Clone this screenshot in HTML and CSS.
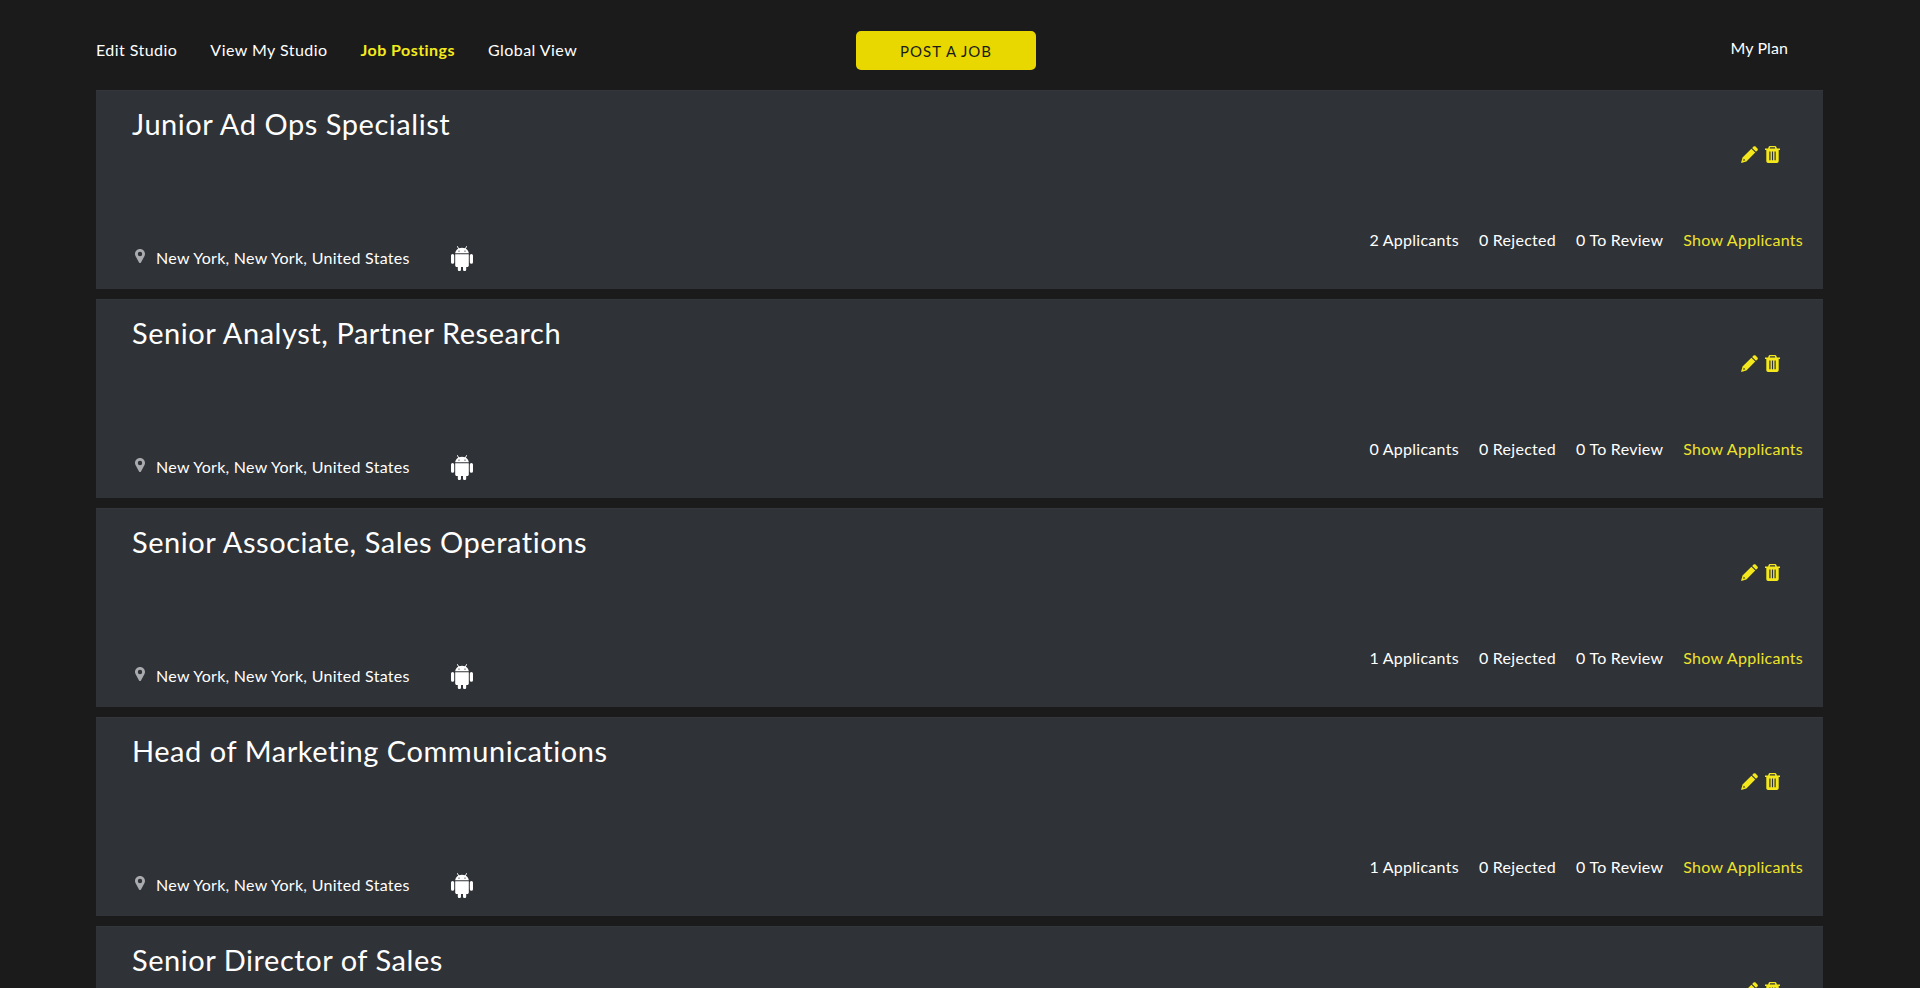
FILE: index.html
```html
<!DOCTYPE html>
<html lang="en">
<head>
<meta charset="utf-8">
<title>Job Postings</title>
<link rel="stylesheet" href="styles.css">
</head>
<body>
<svg class="defs" width="0" height="0" aria-hidden="true">
  <symbol id="pin" viewBox="0 0 10 14"><path fill-rule="evenodd" d="M5 0C2.200 0 0 2.200 0 5c0 .8.2 1.400.5 2L4 13.400c.4.8 1.600.8 2 0L9.500 7c.3-.6.5-1.200.5-2 0-2.800-2.200-5-5-5zm0 7.200A2.200 2.200 0 1 1 5 2.800a2.200 2.200 0 0 1 0 4.400z"/></symbol>
  <symbol id="android" viewBox="0 0 22 26"><path fill-rule="evenodd" d="M6.600 1 5.900 1.400 7.200 3.700C5.400 4.700 4.300 6.400 4.200 8.300h13.600c-.1-1.900-1.200-3.600-3-4.600l1.300-2.300-.7-.4-1.300 2.300a8 8 0 0 0-6.200 0L6.600 1zM8 5.400a.7.700 0 1 1 0 1.400.7.700 0 0 1 0-1.400zm6 0a.7.700 0 1 1 0 1.400.7.700 0 0 1 0-1.400zM4.200 9.200v11.200c0 .9.700 1.500 1.500 1.500h1.100v2.700a1.600 1.600 0 0 0 3.200 0v-2.700h2v2.700a1.600 1.600 0 0 0 3.200 0v-2.700h1.100c.8 0 1.500-.6 1.500-1.500V9.200H4.200zM1.600 9A1.600 1.600 0 0 0 0 10.600v6.600a1.600 1.600 0 0 0 3.200 0v-6.600A1.600 1.600 0 0 0 1.600 9zm18.800 0a1.600 1.600 0 0 0-1.600 1.600v6.600a1.600 1.600 0 0 0 3.200 0v-6.600A1.600 1.600 0 0 0 20.400 9z"/></symbol>
  <symbol id="pencil" viewBox="0 0 18 18"><path fill-rule="evenodd" d="M13.300.6 11.800 2.100l4.100 4.100 1.500-1.500c.6-.6.6-1.500 0-2.100l-2-2c-.6-.6-1.500-.6-2.100 0zM11 2.900 1.600 12.300 0 18l5.700-1.600 9.400-9.400L11 2.900zM2.900 13.400l1.700 1.700-2.300.6.600-2.300z"/></symbol>
  <symbol id="trash" viewBox="0 0 15 17"><path fill-rule="evenodd" d="M5 0h5c.7 0 1.200.4 1.400 1l.5 1.500H15V4h-1.300v11c0 1.100-.8 2-1.800 2H3.100c-1 0-1.800-.9-1.800-2V4H0V2.500h3.100L3.600 1C3.800.4 4.300 0 5 0zm.1 1.300-.4 1.200h5.600l-.4-1.200H5.100zM4.300 5.600v8.600h1.200V5.600H4.300zm2.600 0v8.600h1.200V5.600H6.900zm2.600 0v8.600h1.200V5.600H9.500z"/></symbol>
</svg>
<div class="page">
  <header class="topbar">
    <nav class="nav">
      <a class="nav-link" href="#">Edit Studio</a>
      <a class="nav-link" href="#">View My Studio</a>
      <a class="nav-link nav-active" href="#">Job Postings</a>
      <a class="nav-link" href="#">Global View</a>
    </nav>
    <a class="post-btn" href="#">POST A JOB</a>
    <a class="plan-link" href="#">My Plan</a>
  </header>
  <main class="jobs">
    <article class="job">
      <div class="job-left">
        <h2 class="job-title">Junior Ad Ops Specialist</h2>
        <div class="job-meta">
          <svg class="icon-pin"><use href="#pin"/></svg>
          <span class="job-loc">New York, New York, United States</span>
          <svg class="icon-android"><use href="#android"/></svg>
        </div>
      </div>
      <div class="job-right">
        <div class="job-actions">
          <svg class="icon-pencil"><use href="#pencil"/></svg>
          <svg class="icon-trash"><use href="#trash"/></svg>
        </div>
        <div class="job-stats">
          <span>2 Applicants</span><span>0 Rejected</span><span>0 To Review</span><a class="show-link" href="#">Show Applicants</a>
        </div>
      </div>
    </article>
    <article class="job">
      <div class="job-left">
        <h2 class="job-title">Senior Analyst, Partner Research</h2>
        <div class="job-meta">
          <svg class="icon-pin"><use href="#pin"/></svg>
          <span class="job-loc">New York, New York, United States</span>
          <svg class="icon-android"><use href="#android"/></svg>
        </div>
      </div>
      <div class="job-right">
        <div class="job-actions">
          <svg class="icon-pencil"><use href="#pencil"/></svg>
          <svg class="icon-trash"><use href="#trash"/></svg>
        </div>
        <div class="job-stats">
          <span>0 Applicants</span><span>0 Rejected</span><span>0 To Review</span><a class="show-link" href="#">Show Applicants</a>
        </div>
      </div>
    </article>
    <article class="job">
      <div class="job-left">
        <h2 class="job-title">Senior Associate, Sales Operations</h2>
        <div class="job-meta">
          <svg class="icon-pin"><use href="#pin"/></svg>
          <span class="job-loc">New York, New York, United States</span>
          <svg class="icon-android"><use href="#android"/></svg>
        </div>
      </div>
      <div class="job-right">
        <div class="job-actions">
          <svg class="icon-pencil"><use href="#pencil"/></svg>
          <svg class="icon-trash"><use href="#trash"/></svg>
        </div>
        <div class="job-stats">
          <span>1 Applicants</span><span>0 Rejected</span><span>0 To Review</span><a class="show-link" href="#">Show Applicants</a>
        </div>
      </div>
    </article>
    <article class="job">
      <div class="job-left">
        <h2 class="job-title">Head of Marketing Communications</h2>
        <div class="job-meta">
          <svg class="icon-pin"><use href="#pin"/></svg>
          <span class="job-loc">New York, New York, United States</span>
          <svg class="icon-android"><use href="#android"/></svg>
        </div>
      </div>
      <div class="job-right">
        <div class="job-actions">
          <svg class="icon-pencil"><use href="#pencil"/></svg>
          <svg class="icon-trash"><use href="#trash"/></svg>
        </div>
        <div class="job-stats">
          <span>1 Applicants</span><span>0 Rejected</span><span>0 To Review</span><a class="show-link" href="#">Show Applicants</a>
        </div>
      </div>
    </article>
    <article class="job">
      <div class="job-left">
        <h2 class="job-title">Senior Director of Sales</h2>
      </div>
      <div class="job-right">
        <div class="job-actions">
          <svg class="icon-pencil"><use href="#pencil"/></svg>
          <svg class="icon-trash"><use href="#trash"/></svg>
        </div>
      </div>
    </article>
  </main>
</div>
</body>
</html>
```

FILE: styles.css
```css
* { box-sizing: border-box; }
html, body { margin: 0; height: 100%; overflow: hidden; }
body {
  background: #1b1b1c;
  color: #fff;
  font-family: "Lato", "Liberation Sans", sans-serif;
}
a { color: inherit; text-decoration: none; }
.defs { display: block; height: 0; }
.page { padding: 0 97px 0 96px; }

.topbar {
  display: grid;
  grid-template-columns: 760px 180px 1fr;
  align-items: center;
  height: 90px;
  padding-top: 10px;
}
.nav { display: flex; gap: 33px; margin-top: -2px; }
.nav-link { font-size: 16px; letter-spacing: .45px; }
.nav-active { color: #f4ea1c; font-weight: 700; }
.post-btn {
  display: flex; align-items: center; justify-content: center;
  height: 39px;
  margin-top: 1px;
  background: #e8d800;
  border-radius: 5px;
  color: #1b1b1c;
  font-size: 15px;
  letter-spacing: 1px;
}
.plan-link { justify-self: end; margin: -6px 35px 0 0; font-size: 16px; letter-spacing: .1px; }

.jobs { display: flex; flex-direction: column; gap: 10px; }
.job {
  display: flex; justify-content: space-between;
  height: 199px;
  background: #2f3237;
  border-top: 1px solid #33363b;
  padding: 0 20px 0 36px;
}
.job-left { display: flex; flex-direction: column; justify-content: space-between; padding: 15px 0 18px; }
.job-title { margin: 0; font-size: 29px; line-height: 36px; font-weight: 400; letter-spacing: .55px; }
.job-meta { display: flex; align-items: center; font-size: 16px; }
.job-loc { letter-spacing: .28px; margin: -2px 0 0 11px; }
.icon-pin { width: 10px; height: 14px; fill: #a9abae; margin: -4px 0 0 3px; }
.icon-android { width: 22px; height: 26px; fill: #fff; margin-left: 41px; }

.job-right { display: flex; flex-direction: column; align-items: flex-end; justify-content: space-between; padding: 55px 0 40px; }
.job-actions { display: flex; align-items: center; gap: 7px; margin-right: 23px; }
.icon-pencil { width: 17px; height: 17px; fill: #f4e81c; }
.icon-trash { width: 15px; height: 17px; fill: #f4e81c; }
.job-stats { display: flex; gap: 20px; font-size: 16px; letter-spacing: .27px; }
.show-link { color: #eee32a; }
```
